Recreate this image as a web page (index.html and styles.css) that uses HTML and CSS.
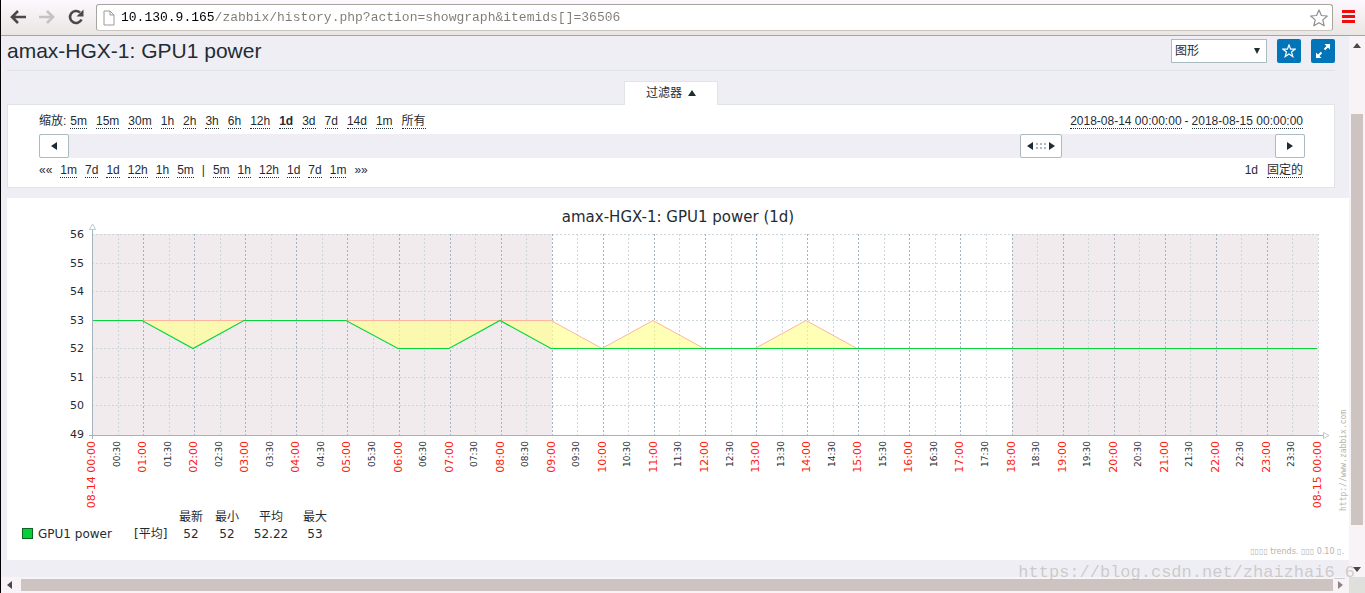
FILE: index.html
```html
<!DOCTYPE html>
<html lang="zh-CN">
<head>
<meta charset="utf-8">
<title>amax-HGX-1: GPU1 power</title>
<link rel="stylesheet" href="styles.css">
</head>
<body>
<div class="browser">
  <header class="toolbar">
    <button class="nav-btn" type="button" aria-label="Back">
      <svg width="18" height="16" viewBox="0 0 18 16"><path d="M9 2 3 8l6 6M3.500 8H17" fill="none" stroke="#494949" stroke-width="2.600"/></svg>
    </button>
    <button class="nav-btn" type="button" aria-label="Forward" disabled>
      <svg width="18" height="16" viewBox="0 0 18 16"><path d="m9 2 6 6-6 6M14.500 8H1" fill="none" stroke="#c4c2c2" stroke-width="2.600"/></svg>
    </button>
    <button class="nav-btn" type="button" aria-label="Reload">
      <svg width="18" height="16" viewBox="0 0 18 16"><path d="M14.500 10.500A6 6 0 1 1 13 3.500" fill="none" stroke="#494949" stroke-width="2.600"/><path d="M16.500.5v7h-7z" fill="#494949"/></svg>
    </button>
    <div class="address">
      <svg width="12" height="16" viewBox="0 0 12 16"><path d="M1 1h6l4 4v10H1zM7 1v4h4" fill="#fff" stroke="#9a9a9a"/></svg>
      <input class="url" type="text" aria-label="Address" value="10.130.9.165/zabbix/history.php?action=showgraph&amp;itemids[]=36506">
      <svg width="18" height="18" viewBox="0 0 18 18"><path d="m9 1 2.400 5.500 5.900.5-4.500 3.900 1.400 5.900L9 13.700l-5.200 3.100 1.400-5.900L.7 7l5.900-.5z" fill="#fff" stroke="#8f8f8f" stroke-width="1.200" stroke-linejoin="round"/></svg>
    </div>
    <button class="menu-btn" type="button" aria-label="Menu">
      <svg width="13" height="13" viewBox="0 0 13 13"><path d="M0 1.500h13M0 6.500h13M0 11.500h13" stroke="#f00c0c" stroke-width="3"/></svg>
    </button>
  </header>

  <main class="page">
    <div class="inset">
      <div class="page-head">
        <h1>amax-HGX-1: GPU1 power</h1>
        <div class="select-wrap">
          <select aria-label="视图"><option>图形</option></select>
          <svg class="caret" width="6" height="6" viewBox="0 0 6 6"><path d="M0 0h6L3 6z" fill="#1f2c33"/></svg>
        </div>
        <button class="icon-btn" type="button" aria-label="收藏">
          <svg width="14" height="14" viewBox="0 0 14 14"><path d="m7 1 1.600 4.200h4.400L9.500 8l1.300 4.500L7 9.900l-3.800 2.600L4.500 8 1 5.200h4.400z" fill="none" stroke="#fff" stroke-width="1.200"/></svg>
        </button>
        <button class="icon-btn" type="button" aria-label="全屏">
          <svg width="16" height="16" viewBox="0 0 16 16"><path d="M9.500 1H15v5.500zM1 9.500V15h5.500z" fill="#fff"/><path d="m9.500 6.500 3.500-3.500M3 13l3.500-3.500" stroke="#fff" stroke-width="2"/></svg>
        </button>
      </div>

      <div class="tab-row">
        <button class="filter-tab" type="button">过滤器
          <svg width="8" height="6" viewBox="0 0 8 6"><path d="M4 0l4 6H0z" fill="#1f2c33"/></svg>
        </button>
      </div>
      <section class="filter">
        <div class="row">
          <div class="links zoom">
            <span>缩放:</span><a href="#">5m</a><a href="#">15m</a><a href="#">30m</a><a href="#">1h</a><a href="#">2h</a><a href="#">3h</a><a href="#">6h</a><a href="#">12h</a><a href="#" class="current">1d</a><a href="#">3d</a><a href="#">7d</a><a href="#">14d</a><a href="#">1m</a><a href="#">所有</a>
          </div>
          <div class="links dates"><a href="#">2018-08-14 00:00:00</a><span>-</span><a href="#">2018-08-15 00:00:00</a></div>
        </div>
        <div class="scroller">
          <button class="step" type="button" aria-label="向左"><svg width="6" height="8" viewBox="0 0 6 8"><path d="M6 0v8L0 4z" fill="#1f2c33"/></svg></button>
          <span class="before"></span>
          <button class="handle" type="button" aria-label="时间范围">
            <svg width="28" height="8" viewBox="0 0 28 8"><path d="M6 0v8L0 4zM22 0v8l6-4z" fill="#1f2c33"/><path d="M9 1h2v2H9zM13 1h2v2h-2zM17 1h2v2h-2zM9 5h2v2H9zM13 5h2v2h-2zM17 5h2v2h-2z" fill="#acbbc2"/></svg>
          </button>
          <span class="after"></span>
          <button class="step" type="button" aria-label="向右"><svg width="6" height="8" viewBox="0 0 6 8"><path d="M0 0v8l6-4z" fill="#1f2c33"/></svg></button>
        </div>
        <div class="row">
          <div class="links shift">
            <span>««</span><a href="#">1m</a><a href="#">7d</a><a href="#">1d</a><a href="#">12h</a><a href="#">1h</a><a href="#">5m</a><span>|</span><a href="#">5m</a><a href="#">1h</a><a href="#">12h</a><a href="#">1d</a><a href="#">7d</a><a href="#">1m</a><span>»»</span>
          </div>
          <div class="links"><span>1d</span><a href="#">固定的</a></div>
        </div>
      </section>
    </div>

    <section class="graph">
      <svg class="plot" id="plot" role="img" aria-label="amax-HGX-1: GPU1 power (1d)"></svg>
      <table class="legend">
        <thead><tr><td class="c-name"></td><td class="c-fn"></td><th class="c-s">最新</th><th class="c-m">最小</th><th class="c-l">平均</th><th class="c-m">最大</th></tr></thead>
        <tbody><tr><td><span class="swatch"></span>GPU1 power</td><td>[平均]</td><td class="num">52</td><td class="num">52</td><td class="num">52.22</td><td class="num">53</td></tr></tbody>
      </table>
      <p class="source">▯▯▯▯ trends. ▯▯▯ 0.10 ▯.</p>
    </section>
  </main>

  <div class="vbar">
    <svg width="8" height="5" viewBox="0 0 8 5"><path d="M4 0l4 5H0z" fill="#494949"/></svg>
    <span class="vtrack"><span class="vthumb"></span></span>
    <svg width="8" height="5" viewBox="0 0 8 5"><path d="M0 0h8L4 5z" fill="#494949"/></svg>
  </div>
  <div class="hbar">
    <svg width="5" height="8" viewBox="0 0 5 8"><path d="M5 0v8L0 4z" fill="#494949"/></svg>
    <span class="hthumb"></span>
    <svg width="5" height="8" viewBox="0 0 5 8"><path d="M0 0v8l5-4z" fill="#8b8587"/></svg>
  </div>
  <div class="corner"></div>
  <div class="watermark">https://blog.csdn.net/zhaizhai6_6</div>
</div>
<script src="graph.js"></script>
</body>
</html>
```
FILE: styles.css
```css
* { box-sizing: border-box; }
body {
  margin: 0;
  background: #efeef4;
  color: #1f2c33;
  font: 12px/16px "Liberation Sans", "Noto Sans CJK SC", sans-serif;
}
button { padding: 0; border: 0; background: none; font: inherit; color: inherit; }
svg { display: block; flex: none; }

.browser {
  position: relative;
  display: grid;
  grid-template: 36px minmax(0, 1fr) 16px / minmax(0, 1fr) 16px;
  height: 100vh;
  border-left: 1px solid #000;
  overflow: hidden;
}

.toolbar {
  grid-column: 1 / -1;
  display: flex;
  align-items: center;
  padding: 0 10px 2px 8px;
  background: linear-gradient(#fdf8fd, #e9e6e4);
  border-bottom: 1px solid #a8a4a0;
}
.nav-btn { width: 18px; margin-right: 11px; }
.address {
  flex: 1;
  display: flex;
  align-items: center;
  height: 27px;
  margin-top: 2px;
  padding: 0 4px 0 6px;
  background: #fff;
  border: 1px solid #aaa49f;
  border-bottom-color: #c9c4bf;
  border-radius: 3px;
}
.url {
  flex: 1;
  min-width: 0;
  height: 24px;
  padding: 0 0 0 6px;
  border: 0;
  outline: 0;
  font: 13px/24px "Liberation Mono", monospace;
  background: linear-gradient(90deg, #000 100px, #7d7b74 100px);
  background-clip: text;
  -webkit-background-clip: text;
  color: transparent;
}
.menu-btn { margin-left: 9px; }

.page { overflow: hidden; padding-left: 6px; }
.inset { margin-right: 14px; }
.page-head {
  display: flex;
  align-items: center;
  gap: 10px;
  height: 35px;
  padding-bottom: 5px;
  border-bottom: 1px solid #dfe4e7;
}
h1 { flex: 1; margin: 0; font-size: 21px; line-height: 24px; font-weight: 400; }
.select-wrap { position: relative; width: 96px; }
select {
  appearance: none;
  display: block;
  width: 100%;
  height: 24px;
  padding: 0 3px;
  border: 1px solid #acbbc2;
  border-radius: 0;
  background: #fff;
  color: inherit;
  font: inherit;
}
.caret { position: absolute; right: 7px; top: 9px; pointer-events: none; }
.icon-btn {
  display: grid;
  place-items: center;
  width: 24px;
  height: 24px;
  background: #0275b8;
  border-radius: 2px;
}

.tab-row { display: flex; justify-content: center; margin-top: 10px; }
.filter-tab {
  position: relative;
  display: flex;
  align-items: center;
  justify-content: center;
  gap: 6px;
  width: 94px;
  height: 23px;
  background: #fff;
  border: 1px solid #dfe4e7;
  border-bottom: 0;
}
.filter-tab::after {
  content: "";
  position: absolute;
  inset: 100% 0 auto;
  height: 1px;
  background: #fff;
}
.filter {
  padding: 8px 29px 9px 31px;
  background: #fff;
  border: 1px solid #dfe4e7;
}
.row { display: flex; justify-content: space-between; align-items: center; height: 16px; padding-right: 2px; }
.links { display: flex; align-items: center; gap: 9px; }
.links a { color: inherit; text-decoration: none; height: 15px; line-height: 15px; border-bottom: 1px dotted #1f2c33; }
.links .current { font-weight: 700; }
.zoom span { margin-right: -5px; }
.shift { gap: 8px; }
.dates { gap: 3px; }
.scroller { display: flex; height: 24px; margin: 5px 0 4px; background: #efeef4; }
.scroller button {
  display: grid;
  place-items: center;
  background: #fff;
  border: 1px solid #acbbc2;
  border-radius: 2px;
}
.step { width: 30px; }
.handle { width: 42px; }
.before { flex: 951; }
.after { flex: 213; }

.graph { margin-top: 10px; background: #fff; font-family: "DejaVu Sans", "Noto Sans CJK SC", sans-serif; }
.plot { width: 100%; height: 311px; font-family: "DejaVu Sans", sans-serif; fill: #1f2c33; overflow: visible; }
.t-title { font-size: 15px; text-anchor: middle; }
.t-value { font-size: 11px; text-anchor: end; }
.t-hour { font-size: 11px; text-anchor: end; fill: #ff2010; }
.t-half { font-size: 9px; text-anchor: end; }
.t-site { font: 8px "DejaVu Sans Mono", monospace; fill: #b4b4ac; }

.legend { margin-left: 15px; border-collapse: collapse; table-layout: fixed; line-height: 17px; }
.legend td, .legend th { padding: 0; height: 17px; font-weight: 400; white-space: nowrap; }
.legend .num { text-align: center; }
.c-name { width: 112px; }
.c-fn { width: 38px; }
.c-s { width: 38px; }
.c-m { width: 34px; }
.c-l { width: 54px; }
.swatch {
  display: inline-block;
  width: 11px;
  height: 11px;
  margin-right: 5px;
  vertical-align: -1px;
  background: #04d038;
  border: 1px solid #0d6425;
}
.source { margin: 0; padding: 3px 5px 2px; font-size: 8px; line-height: 12px; text-align: right; color: #b4b4ac; }

.vbar { display: flex; flex-direction: column; align-items: center; gap: 6px; padding: 7px 0 5px; background: #f7f3f7; }
.vtrack { flex: 1; display: flex; padding-top: 60px; padding-bottom: 36px; }
.vthumb { width: 12px; background: #cdc4c1; }
.hbar { display: flex; align-items: center; gap: 5px; padding: 0 6px; background: #f7f3f7; }
.hthumb { flex: 1; height: 12px; margin-left: 4px; background: #cdc4c1; }
.corner { background: #dfe0dc; }
.watermark {
  position: absolute;
  right: 10px;
  bottom: 9px;
  font: 17px/22px "Liberation Mono", monospace;
  color: rgba(160, 158, 150, 0.45);
  pointer-events: none;
}
```
FILE: graph.js
```js
const svg = document.getElementById("plot");
const TOP = 36, HEIGHT = 200, LEFT = 85, RIGHT = 31, HOURS = 24;
const MIN = 49, MAX = 56;
const avg = [53, 53, 52, 53, 53, 53, 52, 52, 53].concat(Array(16).fill(52));
const peak = Array(10).fill(53).concat([52, 53, 52, 52, 53], Array(10).fill(52));

const pad = n => String(n).padStart(2, "0");
const line = (x1, y1, x2, y2, color, dash) =>
  `<path d="M${x1} ${y1}L${x2} ${y2}" stroke="${color}"${dash ? ' stroke-dasharray="2 2"' : ""}/>`;
const text = (cls, x, y, s, turn) =>
  `<text class="${cls}" ${turn ? `transform="translate(${x} ${y}) rotate(-90)"` : `x="${x}" y="${y}"`}>${s}</text>`;

function draw() {
  const width = svg.clientWidth;
  const span = width - LEFT - RIGHT;
  const base = TOP + HEIGHT + 1;
  const px = h => LEFT + Math.round(span * h / HOURS);
  const py = v => TOP + Math.round(HEIGHT * (MAX - v) / (MAX - MIN));
  const pts = data => data.map((v, h) => `${px(h) - (h ? 1 : 0)},${py(v) + 0.5}`);
  let out = "";

  for (const [a, b] of [[0, 9], [18, 24]])
    out += `<rect x="${px(a)}" y="${TOP}" width="${px(b) - px(a)}" height="${HEIGHT + 1}" fill="#f1ebed"/>`;

  for (let v = MIN; v <= MAX; v++) {
    if (v > MIN) out += line(LEFT, py(v) + 0.5, width - RIGHT, py(v) + 0.5, "#ccd6db", true);
    out += text("t-value", LEFT - 8, py(v) + 4, v);
  }
  for (let i = 1; i <= HOURS * 2; i++) {
    const main = i % 2 === 0 && i < HOURS * 2;
    out += line(px(i / 2) + 0.5, TOP, px(i / 2) + 0.5, base, main ? "#a3b3bb" : "#ccd6db", true);
  }
  for (let i = 0; i <= HOURS * 2; i++) {
    const h = Math.floor(i / 2), x = px(i / 2);
    if (i % 2) out += text("t-half", x + 2, base + 6, `${pad(h)}:30`, true);
    else {
      const label = i === 0 ? "08-14 00:00" : h === HOURS ? "08-15 00:00" : `${pad(h)}:00`;
      out += text("t-hour", x + 3, base + 6, label, true);
    }
  }

  out += `<polygon points="${pts(peak).join(" ")} ${pts(avg).reverse().join(" ")}" fill="#ffff96" fill-opacity=".7"/>`;
  out += `<polyline points="${pts(peak).join(" ")}" fill="none" stroke="#ffb4a0"/>`;
  out += `<polyline points="${pts(avg).join(" ")}" fill="none" stroke="#04d63c" stroke-width="1.200"/>`;

  const axis = "#a3b3bb", end = width - RIGHT + 5;
  out += line(LEFT + 0.5, TOP - 5, LEFT + 0.5, base + 4, axis);
  out += line(LEFT - 3, base + 0.5, end, base + 0.5, axis);
  out += `<path d="M${LEFT - 2.5} ${TOP - 4.5}h6l-3-5.500zM${end + 0.5} ${base - 2.5}v6l5.500-3z" fill="#fff" stroke="#bdc9ce"/>`;

  out += text("t-title", width / 2, 24, "amax-HGX-1: GPU1 power (1d)");
  out += text("t-site", width - 3, 313, "http://www.zabbix.com", true);
  svg.innerHTML = out;
}

draw();
window.addEventListener("resize", draw);
```
